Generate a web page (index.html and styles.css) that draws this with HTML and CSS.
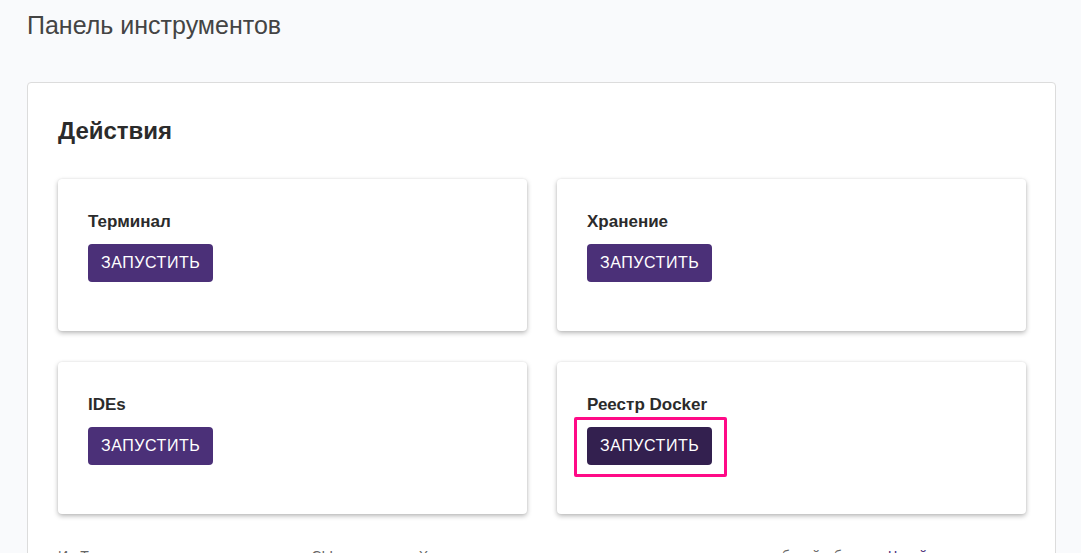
FILE: index.html
```html
<!DOCTYPE html>
<html lang="ru">
<head>
<meta charset="utf-8">
<title>Панель инструментов</title>
<link rel="stylesheet" href="styles.css">
</head>
<body>
<h1 class="page-title">Панель инструментов</h1>
<section class="panel">
  <h2 class="panel-title">Действия</h2>
  <div class="cards">
    <div class="card">
      <h3 class="card-title">Терминал</h3>
      <button class="btn" type="button">Запустить</button>
    </div>
    <div class="card">
      <h3 class="card-title">Хранение</h3>
      <button class="btn" type="button">Запустить</button>
    </div>
    <div class="card">
      <h3 class="card-title">IDEs</h3>
      <button class="btn" type="button">Запустить</button>
    </div>
    <div class="card">
      <h3 class="card-title">Реестр Docker</h3>
      <button class="btn btn-focus" type="button">Запустить</button>
    </div>
  </div>
  <p class="note">Из Терминала вы можете выполнять CLI-команды, а Хранение позволяет управлять томами и данными рабочей области. <a class="link" href="#">Читайте в Документации</a></p>
</section>
</body>
</html>
```
FILE: styles.css
```css
html, body {
  margin: 0;
  padding: 0;
}
body {
  background: #f9fafc;
  font-family: "Liberation Sans", Arial, sans-serif;
  color: #333;
  padding: 0 25px 0 27px;
}
.page-title {
  margin: 0;
  padding: 10px 0 0 0;
  font-size: 25px;
  font-weight: normal;
  line-height: 30px;
  color: #444;
}
.panel {
  margin-top: 42px;
  background: #fff;
  border: 1px solid #dcdcdc;
  border-radius: 4px;
  padding: 33px 29px 0 30px;
}
.panel-title {
  margin: 0 0 34px 0;
  font-size: 24px;
  font-weight: bold;
  line-height: 29px;
  color: #2b2b2b;
}
.cards {
  display: grid;
  grid-template-columns: 1fr 1fr;
  column-gap: 30px;
  row-gap: 31px;
}
.card {
  height: 152px;
  box-sizing: border-box;
  background: #fff;
  border-radius: 4px;
  box-shadow: 0 2px 5px rgba(0, 0, 0, 0.28), 0 0 2px rgba(0, 0, 0, 0.08);
  padding: 33px 30px 0 30px;
}
.card-title {
  margin: 0 0 12px 0;
  font-size: 17px;
  font-weight: bold;
  line-height: 20px;
  color: #2b2b2b;
}
.btn {
  position: relative;
  display: inline-block;
  height: 38px;
  padding: 0 13px;
  border: none;
  border-radius: 4px;
  background: #4b3078;
  color: #fff;
  font-family: "Liberation Sans", Arial, sans-serif;
  font-size: 16px;
  line-height: 38px;
  letter-spacing: 0.55px;
  text-transform: uppercase;
  cursor: pointer;
}
.btn-focus {
  background: #33204f;
}
.btn-focus::after {
  content: "";
  position: absolute;
  left: -13px;
  top: -10px;
  right: -15px;
  bottom: -12px;
  border: 3px solid #ff0a87;
  border-radius: 2px;
}
.note {
  margin: 32px 0 0 0;
  font-size: 14px;
  line-height: 20px;
  color: #666;
  word-spacing: 2px;
}
.link {
  color: #4b3078;
  text-decoration: none;
}
```
